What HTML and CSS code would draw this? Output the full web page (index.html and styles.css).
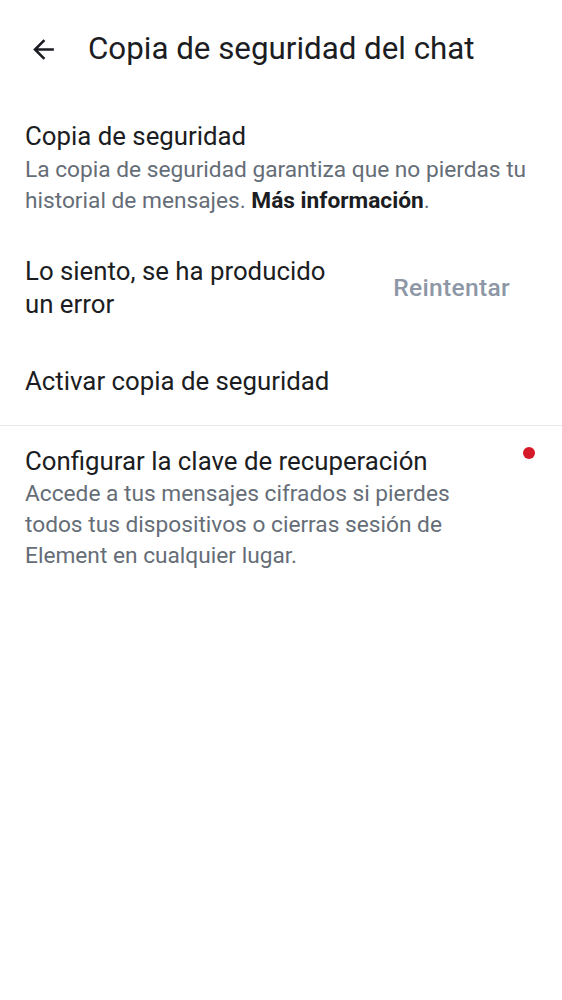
FILE: index.html
```html
<!DOCTYPE html>
<html lang="es">
<head>
<meta charset="utf-8">
<link rel="stylesheet" href="styles.css">
</head>
<body>
<header class="topbar">
  <svg class="back" viewBox="0 0 24 24" width="31" height="31"><path d="M20 11H7.83l5.59-5.59L12 4l-8 8 8 8 1.41-1.41L7.83 13H20v-2z" fill="#1b1d22"/></svg>
  <h1 class="title">Copia de seguridad del chat</h1>
</header>
<main>
  <section class="item item-first">
    <div class="headline">Copia de seguridad</div>
    <div class="support">La copia de seguridad garantiza que no pierdas tu historial de mensajes. <strong>Más información</strong>.</div>
  </section>
  <section class="item item-row item-error">
    <div class="headline error-text">Lo siento, se ha producido un error</div>
    <div class="retry">Reintentar</div>
  </section>
  <section class="item item-activate">
    <div class="headline">Activar copia de seguridad</div>
  </section>
  <hr class="divider">
  <section class="item item-row item-recovery">
    <div class="recovery-text">
      <div class="headline">Configurar la clave de recuperación</div>
      <div class="support support-tight">Accede a tus mensajes cifrados si pierdes todos tus dispositivos o cierras sesión de Element en cualquier lugar.</div>
    </div>
    <span class="dot"></span>
  </section>
</main>
</body>
</html>
```

FILE: styles.css
```css
html, body {
  margin: 0;
  padding: 0;
  background: #ffffff;
}
body {
  font-family: Roboto, "Noto Sans", sans-serif;
  color: #1b1d22;
  width: 562px;
}
.topbar {
  display: flex;
  align-items: center;
  height: 98px;
  padding-left: 28px;
  box-sizing: border-box;
}
.back {
  flex: none;
  display: block;
}
.title {
  margin: 0 0 0 29px;
  font-size: 31.3px;
  font-weight: 400;
  line-height: 40px;
  color: #1b1d22;
}
.item {
  padding: 20px 25px;
}
.item-first {
  padding-top: 22px;
}
.headline {
  font-size: 25.8px;
  line-height: 33px;
  color: #1b1d22;
}
.support {
  font-size: 22.7px;
  line-height: 31px;
  color: #656d77;
  margin-top: 1px;
}
.support-tight {
  margin-top: 0;
}
.support strong {
  color: #1b1d22;
  font-weight: 700;
}
.item-row {
  display: flex;
  align-items: center;
}
.item-error {
  padding-top: 19px;
}
.error-text {
  width: 315px;
}
.retry {
  margin-left: auto;
  margin-right: 27px;
  margin-bottom: 2px;
  font-size: 24.6px;
  font-weight: 500;
  letter-spacing: 0.3px;
  color: #8d97a5;
}
.item-activate {
  padding-top: 24px;
  padding-bottom: 27px;
}
.divider {
  margin: 0;
  border: 0;
  height: 1px;
  background: #e7e9ed;
}
.item-recovery {
  align-items: flex-start;
  padding-top: 19px;
}
.recovery-text {
  width: 460px;
}
.dot {
  margin-left: auto;
  margin-top: 2px;
  margin-right: 2px;
  width: 12px;
  height: 12px;
  border-radius: 50%;
  background: #d51928;
  flex: none;
}
```
